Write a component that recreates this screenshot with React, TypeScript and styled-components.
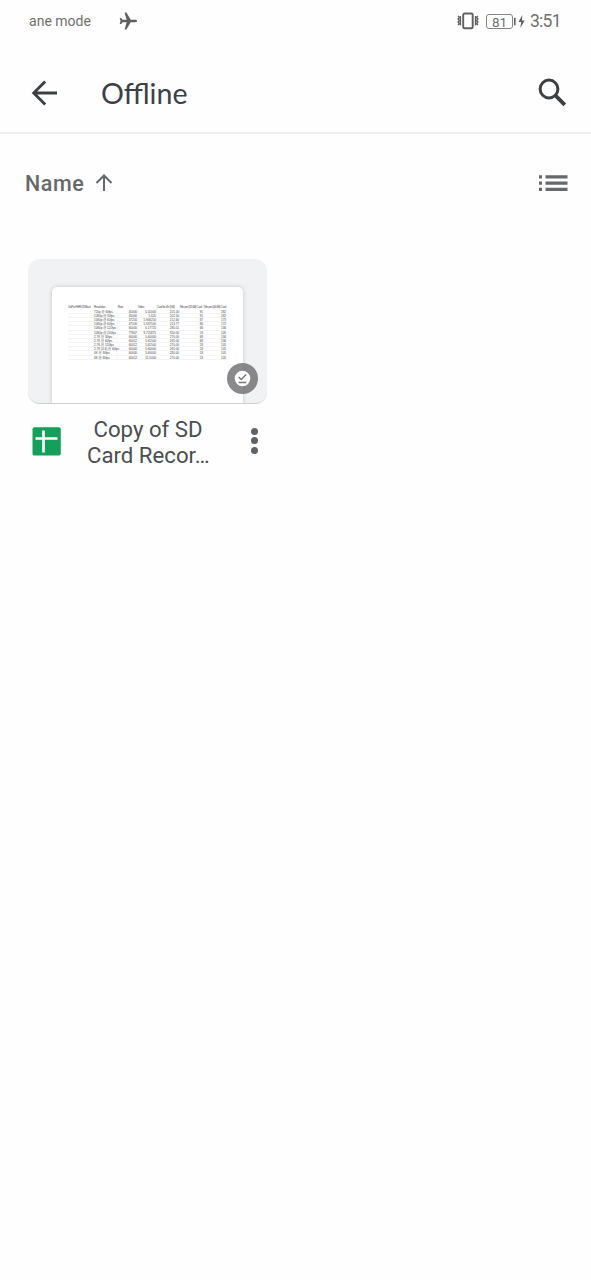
import React from 'react';
import styled, { createGlobalStyle } from 'styled-components';

const GlobalStyle = createGlobalStyle`
  * { box-sizing: border-box; }
  body { margin: 0; background: #fefefe; font-family: Roboto, sans-serif; }
  svg { display: block; flex: none; }
`;

const Screen = styled.main`
  width: 591px;
  height: 1280px;
  overflow: hidden;
  background: #fefefe;
`;

const StatusBar = styled.div`
  display: flex;
  align-items: center;
  height: 42px;
  padding: 0 29px;
  color: #707070;
`;

const Carrier = styled.span`
  width: 90px;
  font-size: 14px;
  letter-spacing: 0.02px;
  white-space: nowrap;
`;

const StatusIcons = styled.div`
  display: flex;
  align-items: center;
  margin-left: auto;
`;

const Battery = styled.span`
  width: 27px;
  height: 15px;
  margin-left: 7px;
  border: 1px solid #858585;
  border-radius: 3px;
  font-size: 13.5px;
  line-height: 14px;
  text-align: center;
`;

const Clock = styled.span`
  width: 32px;
  margin-left: 5px;
  font-size: 17.5px;
  line-height: 20px;
  letter-spacing: -0.75px;
  white-space: nowrap;
`;

const AppBar = styled.header`
  display: flex;
  align-items: center;
  height: 92px;
  padding: 0 24px 0 31px;
  border-bottom: 2px solid #efefef;
  color: #3c4043;
`;

const Title = styled.h1`
  flex: 1;
  margin: 0 0 0 42px;
  padding-top: 12px;
  font: 400 28.6px/34px Lato, sans-serif;
`;

const Icon = styled.svg<{ $drop?: number }>`
  margin-top: ${(p) => p.$drop ?? 0}px;
`;

const SortRow = styled.div`
  display: flex;
  align-items: center;
  height: 98px;
  padding: 0 23px 0 25px;
  color: #66696c;
`;

const SortLabel = styled.span`
  width: 70px;
  font-size: 21.5px;
  font-weight: 500;
  letter-spacing: 0.55px;
`;

const ViewToggle = styled.div`
  margin: 0 0 0 auto;
`;

const Card = styled.article`
  width: 239px;
  margin: 27px 0 0 28px;
`;

const Thumbnail = styled.div`
  position: relative;
  height: 145px;
  padding: 28px 24px 0;
  overflow: hidden;
  border-radius: 12px;
  border-bottom: 1.5px solid #cfd0d1;
  background: #f1f2f4;
`;

const Sheet = styled.div`
  height: 118px;
  padding: 18px 16px 0;
  border-radius: 5px 5px 0 0;
  background: #fff;
  box-shadow: 0 0 4px rgba(60, 64, 67, 0.25);
`;

const SheetRow = styled.div<{ $head?: boolean }>`
  display: grid;
  grid-template-columns: 26px 24px 20px 19px 23px 24px 23px;
  height: ${(p) => (p.$head ? 4.8 : 4.17)}px;
  border-bottom: ${(p) => (p.$head ? '0' : '0.5px solid #f4f4f4')};
  color: ${(p) => (p.$head ? '#555' : '#444')};
  font: 3px/4.17px 'Liberation Sans', sans-serif;
  letter-spacing: ${(p) => (p.$head ? -0.32 : 0)}px;
  white-space: nowrap;
`;

const Cell = styled.span<{ $right?: boolean }>`
  display: flex;
  justify-content: ${(p) => (p.$right ? 'flex-end' : 'flex-start')};
  border-right: 0.5px solid #f8f8f8;
`;

const OfflineBadge = styled.div`
  position: absolute;
  right: 9px;
  bottom: 9px;
  display: grid;
  place-items: center;
  width: 31px;
  height: 31px;
  border-radius: 50%;
  background: rgba(105, 105, 107, 0.78);
`;

const FileRow = styled.div`
  display: flex;
  align-items: center;
  height: 73px;
  padding: 0 9px 0 4px;
`;

const FileName = styled.div`
  width: 122px;
  margin: 3px 0 0 26px;
  color: #4b4e51;
  font-size: 22.2px;
  line-height: 26px;
  text-align: center;
  white-space: nowrap;
`;

const MoreButton = styled.div`
  display: flex;
  flex-direction: column;
  gap: 2.5px;
  margin-left: auto;
`;

const Dot = styled.span`
  width: 7px;
  height: 7px;
  border-radius: 50%;
  background: #5f6368;
`;

const headings = ['GoPro HERO8 Black', 'Resolution', 'Rate', 'Video', 'Card for 4hr (GB)', 'Min per (32GB) Card', 'Min per (64GB) Card'];

const rows = [
  ['720p @ 60fps', '45000', '5.55000', '201.00', '91', '182'],
  ['1080p @ 30fps', '45000', '5.625', '202.50', '91', '182'],
  ['1080p @ 60fps', '47250', '5.906250', '212.60', '87', '173'],
  ['1080p @ 60fps', '47500', '5.937500', '213.77', '86', '172'],
  ['1080p @ 120fps', '60000', '6.17725', '280.01', '68', '136'],
  ['1080p @ 240fps', '77807', '9.725875', '350.00', '53', '105'],
  ['2.7K @ 30fps', '60000', '5.60000', '270.00', '68', '134'],
  ['2.7K @ 60fps', '60012', '5.61500', '265.00', '68', '136'],
  ['2.7K @ 120fps', '60012', '5.61500', '270.00', '53', '105'],
  ['2.7K (4:3) @ 60fps', '60000', '5.60000', '265.00', '53', '105'],
  ['4K @ 30fps', '60000', '5.60000', '280.00', '53', '105'],
  ['4K @ 60fps', '60012', '12.5000', '270.00', '53', '105'],
];

export default function App() {
  return (
    <>
      <GlobalStyle />
      <Screen>
        <StatusBar>
          <Carrier>ane mode</Carrier>
          <Icon width="19" height="18" viewBox="0 0 19 18" $drop={-1}>
            <path fill="#606060" d="M18 9c0-.8-.7-1.200-1.500-1.200h-4.800L7.400.5H5.600l2 7.300H3.600L2.100 5.900H.7L1.500 9l-.8 3.100h1.400l1.500-1.900h4l-2 7.300h1.800l4.300-7.300h4.800c.8 0 1.500-.4 1.500-1.200z" />
          </Icon>
          <StatusIcons>
            <Icon width="22" height="18" viewBox="0 0 22 18" fill="none" stroke="#606060" $drop={-1}>
              <rect x="6.200" y="1.500" width="9.500" height="14.800" rx="1.300" strokeWidth="1.900" />
              <path strokeWidth="1.300" d="M1 4l1.500 1.500L1 7l1.500 1.500L1 10l1.500 1.500L1 13M3.500 4v9.500M21 4l-1.500 1.500L21 7l-1.500 1.500L21 10l-1.500 1.500L21 13M18.500 4v9.500" />
            </Icon>
            <Battery>81</Battery>
            <Icon width="12" height="15" viewBox="0 0 12 15" fill="#606060">
              <path d="M1 3.800h1.600v7.400H1zM9.300 1L5.500 8h2.700L7.300 14 11.700 6.400H9z" />
            </Icon>
            <Clock>3:51</Clock>
          </StatusIcons>
        </StatusBar>
        <AppBar>
          <Icon width="28" height="28" viewBox="0 0 28 28" fill="none" stroke="currentColor" strokeWidth="2.8" $drop={12}>
            <path d="M26 14H3M14.200 2.500L2.700 14l11.500 11.500" />
          </Icon>
          <Title>Offline</Title>
          <Icon width="29" height="29" viewBox="0 0 29 29" fill="none" stroke="currentColor" $drop={11}>
            <circle cx="11" cy="11" r="8.900" strokeWidth="3" />
            <path d="M17.300 17.300l9.500 9.500" strokeWidth="3.800" />
          </Icon>
        </AppBar>
        <SortRow>
          <SortLabel>Name</SortLabel>
          <Icon width="18" height="18" viewBox="0 0 18 18" fill="none" stroke="currentColor" strokeWidth="2">
            <path d="M9 17V2M1.500 9L9 1.500 16.500 9" />
          </Icon>
          <ViewToggle>
            <Icon width="30" height="17" viewBox="0 0 30 17" fill="currentColor">
              <path d="M1 .2h3v3.200H1zM7.500.2H29.500v3.200H7.500zM1 6.500h3v3.200H1zM7.500 6.500H29.500v3.200H7.500zM1 12.800h3v3.200H1zM7.500 12.800H29.500v3.200H7.500z" />
            </Icon>
          </ViewToggle>
        </SortRow>
        <Card>
          <Thumbnail>
            <Sheet>
              <SheetRow $head>
                {headings.map((h) => <Cell key={h}>{h}</Cell>)}
              </SheetRow>
              {rows.map((row) => (
                <SheetRow key={row.join()}>
                  <Cell />
                  {row.map((value, i) => <Cell key={i} $right={i > 0}>{value}</Cell>)}
                </SheetRow>
              ))}
            </Sheet>
            <OfflineBadge>
              <Icon width="17" height="17" viewBox="0 0 17 17" fill="none">
                <circle cx="8.500" cy="8.500" r="7.800" fill="#fff" />
                <path d="M4.700 7l2.500 2.500 5-5M4.700 12.500h7.600" stroke="#777" strokeWidth="1.400" />
              </Icon>
            </OfflineBadge>
          </Thumbnail>
          <FileRow>
            <Icon width="29" height="29" viewBox="0 0 29 29" $drop={1}>
              <rect x=".5" y=".2" width="28.300" height="28.300" rx="2" fill="#149f5b" />
              <path d="M3.500 11.500h22M11.500 3.500v22" stroke="#fff" strokeWidth="2.700" />
            </Icon>
            <FileName>
              <div>Copy of SD</div>
              <div>Card Recor…</div>
            </FileName>
            <MoreButton><Dot /><Dot /><Dot /></MoreButton>
          </FileRow>
        </Card>
      </Screen>
    </>
  );
}
